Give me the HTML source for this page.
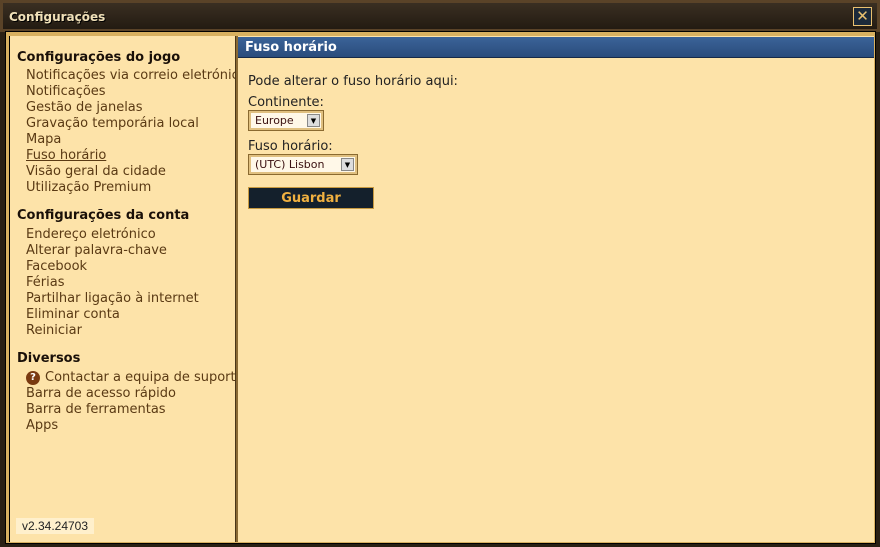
<!DOCTYPE html>
<html><head><meta charset="utf-8"><style>
*{margin:0;padding:0;box-sizing:border-box}
body{width:880px;height:547px;overflow:hidden;background:#2a2014;font-family:"DejaVu Sans","Liberation Sans",sans-serif;position:relative}
.title{position:absolute;left:0;top:0;width:880px;height:32px;background:linear-gradient(#3a2f22,#231b12);border:3px solid #5a4328}
.title span{position:absolute;left:6px;top:7px;color:#f0e0b8;font-weight:bold;font-size:12px;text-shadow:1px 1px 0 #000}
.close{position:absolute;left:853px;top:7px;width:19px;height:19px;border:1px solid #e8c070;background:#1c2a3a;color:#e8c070;font-size:15px;line-height:16px;text-align:center}
.frame{position:absolute;left:5px;top:31px;width:871px;height:513px;background:#d8b060;border:1px solid #000}
.left{position:absolute;left:9px;top:36px;width:226px;height:506px;background:#fde3a9;border-left:1px solid #000}
.div{position:absolute;left:235px;top:36px;width:3px;height:506px;background:#8a6a34;border-left:1px solid #4a3618}
.right{position:absolute;left:238px;top:36px;width:636px;height:506px;background:#fde3a9}
.hdr{position:absolute;left:238px;top:37px;width:636px;height:21px;background:linear-gradient(#3b6398,#2a4c7c);border-bottom:1px solid #162a48;color:#fff;font-weight:bold;font-size:13px;padding:3px 7px;line-height:16px}
.lp{position:absolute;left:0;top:2px;width:240px;height:440px}
.t{position:absolute;font-size:13px;color:#5a3a14;white-space:nowrap;line-height:16px}
.h{position:absolute;font-size:13px;font-weight:bold;color:#1a1008;white-space:nowrap;line-height:16px}
.k{position:absolute;font-size:13px;color:#222;white-space:nowrap;line-height:16px}
.sel{position:absolute;height:21px;border:1px solid #8a6a30;background:#fff8e8;box-shadow:inset 0 0 0 2px #e0c080;font-size:11px;color:#3a1010;padding:4px 6px;line-height:12px}
.sel b{position:absolute;right:3px;top:3px;width:13px;height:13px;background:#ddd;border:1px solid #888;font-size:7px;text-align:center;line-height:12px;color:#000}
.btn{position:absolute;left:248px;top:187px;width:126px;height:22px;background:#14202c;border:1px solid #c89a40;color:#f0b040;font-weight:bold;font-size:13px;text-align:center;line-height:21px}
.ver{position:absolute;left:16px;top:518px;width:78px;height:16px;background:#fff0cc;font-family:"Liberation Sans",sans-serif;font-size:12px;color:#222;text-align:center;line-height:16px}
.q{display:inline-block;width:14px;height:14px;border-radius:50%;background:#7a3a10;color:#fff;font-size:10px;font-weight:bold;text-align:center;line-height:14px;vertical-align:top;margin-top:1px;margin-right:5px}
</style></head><body>
<div class="title"><span>Configurações</span></div>
<div class="close">✕</div>
<div class="frame"></div>
<div class="left"></div><div class="div"></div><div class="right"></div>
<div class="hdr">Fuso horário</div>
<div class="lp">
<div class="h" style="left:17px;top:48px">Configurações do jogo</div>
<div class="t" style="left:26px;top:66px;width:209px;overflow:hidden">Notificações via correio eletrónico</div>
<div class="t" style="left:26px;top:82px">Notificações</div>
<div class="t" style="left:26px;top:98px">Gestão de janelas</div>
<div class="t" style="left:26px;top:114px">Gravação temporária local</div>
<div class="t" style="left:26px;top:130px">Mapa</div>
<div class="t" style="left:26px;top:146px;text-decoration:underline">Fuso horário</div>
<div class="t" style="left:26px;top:162px">Visão geral da cidade</div>
<div class="t" style="left:26px;top:178px">Utilização Premium</div>
<div class="h" style="left:17px;top:206px">Configurações da conta</div>
<div class="t" style="left:26px;top:225px">Endereço eletrónico</div>
<div class="t" style="left:26px;top:241px">Alterar palavra-chave</div>
<div class="t" style="left:26px;top:257px">Facebook</div>
<div class="t" style="left:26px;top:273px">Férias</div>
<div class="t" style="left:26px;top:289px">Partilhar ligação à internet</div>
<div class="t" style="left:26px;top:305px">Eliminar conta</div>
<div class="t" style="left:26px;top:321px">Reiniciar</div>
<div class="h" style="left:17px;top:349px">Diversos</div>
<div class="t" style="left:26px;top:368px;width:209px;overflow:hidden;height:16px"><span class="q">?</span>Contactar a equipa de suporte</div>
<div class="t" style="left:26px;top:384px">Barra de acesso rápido</div>
<div class="t" style="left:26px;top:400px">Barra de ferramentas</div>
<div class="t" style="left:26px;top:416px">Apps</div>
</div>
<div class="k" style="left:248px;top:74px">Pode alterar o fuso horário aqui:</div>
<div class="k" style="left:248px;top:95px">Continente:</div>
<div class="sel" style="left:248px;top:110px;width:76px">Europe<b>▼</b></div>
<div class="k" style="left:248px;top:139px">Fuso horário:</div>
<div class="sel" style="left:248px;top:154px;width:110px">(UTC) Lisbon<b>▼</b></div>
<div class="btn">Guardar</div>
<div class="ver">v2.34.24703</div>
</body></html>
